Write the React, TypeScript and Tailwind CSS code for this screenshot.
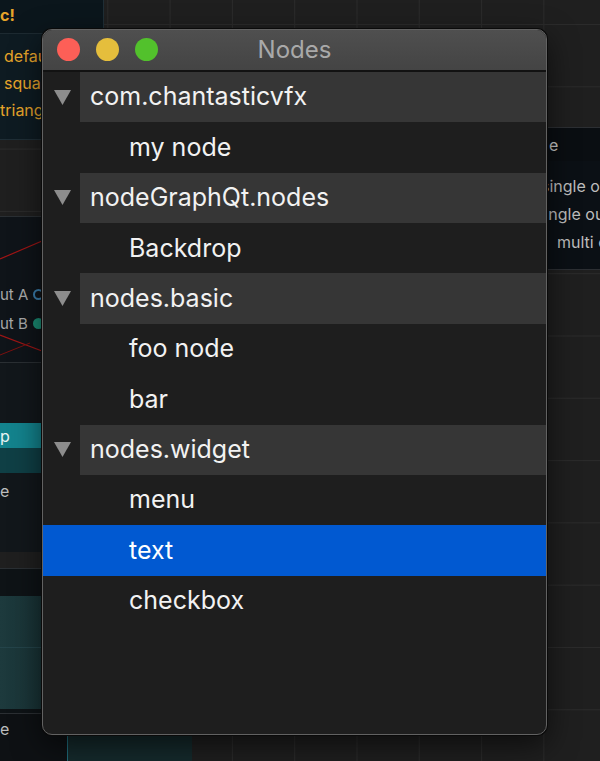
import React from "react";

const groups = [
  { name: "com.chantasticvfx", items: ["my node"] },
  { name: "nodeGraphQt.nodes", items: ["Backdrop"] },
  { name: "nodes.basic", items: ["foo node", "bar"] },
  { name: "nodes.widget", items: ["menu", "text", "checkbox"] },
];

function Triangle() {
  return (
    <svg width="17" height="15" viewBox="0 0 17 15" className="block">
      <polygon points="0,0 17,0 8.5,15" fill="#8d8d8d" />
    </svg>
  );
}

function Background() {
  return (
    <>
      {/* top-left node */}
      <div className="absolute left-0 top-0 w-[104px] h-[140px] bg-[#0e1b22] border-r border-b border-[#1f2e36] flex flex-col">
        <div className="h-[34px] shrink-0 bg-[#0b161c] border-b border-[#1d2a31] flex items-end pb-[10px]">
          <span className="text-[16px] font-bold text-[#e7a52a] leading-none">c!</span>
        </div>
        <div className="pl-[4px] pt-[14px] flex flex-col gap-[11px] text-[16px] leading-none text-[#e7a52a]">
          <span>default</span>
          <span>square</span>
          <span className="-ml-[4px]">triangle</span>
        </div>
      </div>
      {/* second node */}
      <div className="absolute left-0 top-[216px] w-[60px] h-[146px] bg-[#0f1419] border-t border-[#2a2f33]">
        <svg width="60" height="146" className="absolute left-0 top-0">
          <line x1="0" y1="42" x2="42" y2="24" stroke="#a01515" strokeWidth="1.2" />
          <line x1="0" y1="118" x2="42" y2="134" stroke="#a01515" strokeWidth="1.2" />
          <line x1="0" y1="138" x2="30" y2="126" stroke="#7a1010" strokeWidth="1" />
        </svg>
        <div className="relative pt-[70px] flex flex-col gap-[14px] text-[15px] leading-none text-[#a9a9a9]">
          <div className="flex items-center gap-[5px]">
            <span>ut A</span>
            <span className="w-[11px] h-[11px] rounded-full border-2 border-[#3b7fae]" />
          </div>
          <div className="flex items-center gap-[5px]">
            <span>ut B</span>
            <span className="w-[11px] h-[11px] rounded-full bg-[#1a8c74]" />
          </div>
        </div>
      </div>
      {/* third node */}
      <div className="absolute left-0 top-[362px] w-[60px] h-[190px] bg-[#12171b] border-t border-[#2a2f33] flex flex-col pt-[60px]">
        <div className="h-[25px] bg-[#13838d] flex items-center text-[16px] leading-none text-[#e8f4f4]">p</div>
        <div className="h-[25px] bg-[#0f3f45]" />
        <div className="pt-[10px] text-[16px] leading-none text-[#bdbdbd]">e</div>
      </div>
      {/* fourth node */}
      <div className="absolute left-0 top-[568px] w-[60px] h-[145px] bg-[#0e1316] border-t border-[#2a2f33] flex flex-col pt-[27px]">
        <div className="h-[113px] bg-[linear-gradient(to_right,#1d3a3d,#173033)] flex flex-col pt-[51px]">
          <div className="h-px bg-[#24444a]" />
        </div>
      </div>
      <div className="absolute left-0 top-[713px] w-[70px] h-[48px] bg-[#0e1114] border-t border-[#2b2f33] pt-[7px] text-[16px] leading-none text-[#bdbdbd]">
        e
      </div>
      <div className="absolute left-[67px] top-[736px] w-[125px] h-[25px] bg-[#152a2c] border-l border-[#1f6b7a]" />
      {/* right node */}
      <div className="absolute left-[540px] top-[127px] w-[60px] h-[143px] overflow-hidden bg-[#0b1015] border-t border-b border-[#2c2f33] flex flex-col text-[16px] leading-none text-[#bdbdbd] whitespace-nowrap">
        <div className="h-[33px] shrink-0 bg-[#0a0e12] flex items-center pl-[9px] text-[#c8c8c8]">e</div>
        <div className="pt-[17px] flex flex-col gap-[12px]">
          <span className="pl-[1px]">single out</span>
          <span className="-ml-[4px]">single out</span>
          <span className="pl-[17px]">multi out</span>
        </div>
      </div>
    </>
  );
}

export default function App() {
  return (
    <div className="relative w-[600px] h-[761px] overflow-hidden bg-[#1f1f1f] bg-[linear-gradient(to_right,#2b2b2b_1px,transparent_1px),linear-gradient(to_bottom,#2b2b2b_1px,transparent_1px)] bg-[size:62.3px_62.3px] bg-[position:45px_24px] font-['Inter',sans-serif]">
      <Background />
      <div className="absolute left-[42px] top-[29px] w-[505px] h-[706px] rounded-[10px] border border-[#626262] bg-[#1e1e1e] overflow-hidden shadow-[0_0_0_1px_#0a0a0a,0_10px_30px_rgba(0,0,0,0.6)] flex flex-col">
        <div className="relative h-[40px] shrink-0 bg-[linear-gradient(to_bottom,#4f4f4f,#444444)] flex items-center">
          <div className="absolute left-[14px] top-[8px] flex gap-[16px]">
            <div className="w-[23px] h-[23px] rounded-full bg-[#fd5f57]" />
            <div className="w-[23px] h-[23px] rounded-full bg-[#e5be3c]" />
            <div className="w-[23px] h-[23px] rounded-full bg-[#52c12c]" />
          </div>
          <div className="w-full text-center text-[24px] text-[#a9a9a9] leading-none">Nodes</div>
        </div>
        <div className="h-[2px] shrink-0 bg-[#121212]" />
        <div className="flex flex-col text-[25px] text-[#f2f2f2]">
          {groups.map((g) => (
            <React.Fragment key={g.name}>
              <div className="h-[50.36px] flex">
                <div className="w-[37px] shrink-0 flex items-center pl-[11px]">
                  <Triangle />
                </div>
                <div className="flex-1 bg-[#363636] flex items-center pl-[10px]">{g.name}</div>
              </div>
              {g.items.map((it) => (
                <div
                  key={it}
                  className={
                    it === "text"
                      ? "h-[50.36px] flex items-center pl-[86px] bg-[#0159d1] text-white"
                      : "h-[50.36px] flex items-center pl-[86px]"
                  }
                >
                  {it}
                </div>
              ))}
            </React.Fragment>
          ))}
        </div>
      </div>
    </div>
  );
}
